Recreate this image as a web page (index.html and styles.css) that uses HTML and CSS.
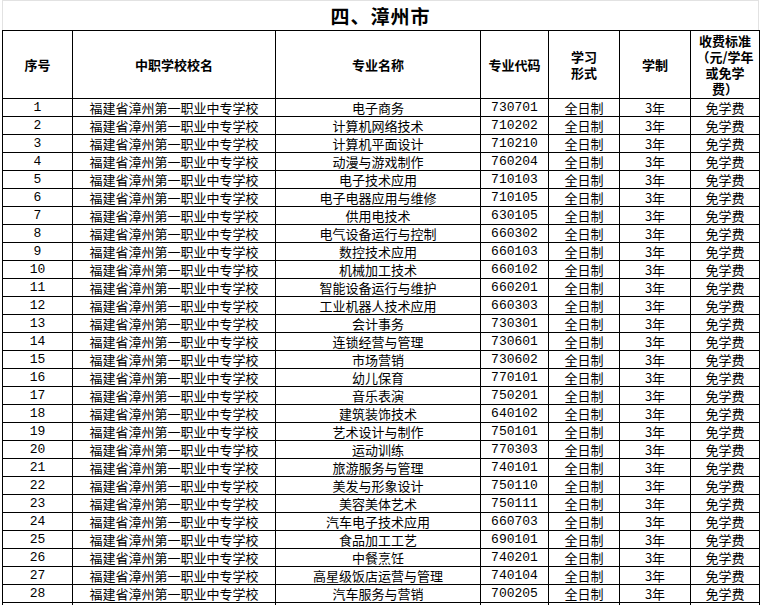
FILE: index.html
```html
<!DOCTYPE html>
<html lang="zh-CN">
<head>
<meta charset="utf-8">
<title>四、漳州市</title>
<link rel="stylesheet" href="styles.css">
</head>
<body>
<div class="sheet">
  <div class="title">四、漳州市</div>
  <table class="grid">
    <colgroup>
      <col class="c-no"><col class="c-school"><col class="c-major"><col class="c-code"><col class="c-form"><col class="c-years"><col class="c-fee">
    </colgroup>
    <thead>
      <tr>
        <th>序号</th>
        <th>中职学校校名</th>
        <th>专业名称</th>
        <th>专业代码</th>
        <th>学习<br>形式</th>
        <th>学制</th>
        <th>收费标准<br>（元/学年<br>或免学<br>费）</th>
      </tr>
    </thead>
    <tbody>
      <tr><td class="num">1</td><td>福建省漳州第一职业中专学校</td><td>电子商务</td><td class="num">730701</td><td>全日制</td><td>3年</td><td>免学费</td></tr>
      <tr><td class="num">2</td><td>福建省漳州第一职业中专学校</td><td>计算机网络技术</td><td class="num">710202</td><td>全日制</td><td>3年</td><td>免学费</td></tr>
      <tr><td class="num">3</td><td>福建省漳州第一职业中专学校</td><td>计算机平面设计</td><td class="num">710210</td><td>全日制</td><td>3年</td><td>免学费</td></tr>
      <tr><td class="num">4</td><td>福建省漳州第一职业中专学校</td><td>动漫与游戏制作</td><td class="num">760204</td><td>全日制</td><td>3年</td><td>免学费</td></tr>
      <tr><td class="num">5</td><td>福建省漳州第一职业中专学校</td><td>电子技术应用</td><td class="num">710103</td><td>全日制</td><td>3年</td><td>免学费</td></tr>
      <tr><td class="num">6</td><td>福建省漳州第一职业中专学校</td><td>电子电器应用与维修</td><td class="num">710105</td><td>全日制</td><td>3年</td><td>免学费</td></tr>
      <tr><td class="num">7</td><td>福建省漳州第一职业中专学校</td><td>供用电技术</td><td class="num">630105</td><td>全日制</td><td>3年</td><td>免学费</td></tr>
      <tr><td class="num">8</td><td>福建省漳州第一职业中专学校</td><td>电气设备运行与控制</td><td class="num">660302</td><td>全日制</td><td>3年</td><td>免学费</td></tr>
      <tr><td class="num">9</td><td>福建省漳州第一职业中专学校</td><td>数控技术应用</td><td class="num">660103</td><td>全日制</td><td>3年</td><td>免学费</td></tr>
      <tr><td class="num">10</td><td>福建省漳州第一职业中专学校</td><td>机械加工技术</td><td class="num">660102</td><td>全日制</td><td>3年</td><td>免学费</td></tr>
      <tr><td class="num">11</td><td>福建省漳州第一职业中专学校</td><td>智能设备运行与维护</td><td class="num">660201</td><td>全日制</td><td>3年</td><td>免学费</td></tr>
      <tr><td class="num">12</td><td>福建省漳州第一职业中专学校</td><td>工业机器人技术应用</td><td class="num">660303</td><td>全日制</td><td>3年</td><td>免学费</td></tr>
      <tr><td class="num">13</td><td>福建省漳州第一职业中专学校</td><td>会计事务</td><td class="num">730301</td><td>全日制</td><td>3年</td><td>免学费</td></tr>
      <tr><td class="num">14</td><td>福建省漳州第一职业中专学校</td><td>连锁经营与管理</td><td class="num">730601</td><td>全日制</td><td>3年</td><td>免学费</td></tr>
      <tr><td class="num">15</td><td>福建省漳州第一职业中专学校</td><td>市场营销</td><td class="num">730602</td><td>全日制</td><td>3年</td><td>免学费</td></tr>
      <tr><td class="num">16</td><td>福建省漳州第一职业中专学校</td><td>幼儿保育</td><td class="num">770101</td><td>全日制</td><td>3年</td><td>免学费</td></tr>
      <tr><td class="num">17</td><td>福建省漳州第一职业中专学校</td><td>音乐表演</td><td class="num">750201</td><td>全日制</td><td>3年</td><td>免学费</td></tr>
      <tr><td class="num">18</td><td>福建省漳州第一职业中专学校</td><td>建筑装饰技术</td><td class="num">640102</td><td>全日制</td><td>3年</td><td>免学费</td></tr>
      <tr><td class="num">19</td><td>福建省漳州第一职业中专学校</td><td>艺术设计与制作</td><td class="num">750101</td><td>全日制</td><td>3年</td><td>免学费</td></tr>
      <tr><td class="num">20</td><td>福建省漳州第一职业中专学校</td><td>运动训练</td><td class="num">770303</td><td>全日制</td><td>3年</td><td>免学费</td></tr>
      <tr><td class="num">21</td><td>福建省漳州第一职业中专学校</td><td>旅游服务与管理</td><td class="num">740101</td><td>全日制</td><td>3年</td><td>免学费</td></tr>
      <tr><td class="num">22</td><td>福建省漳州第一职业中专学校</td><td>美发与形象设计</td><td class="num">750110</td><td>全日制</td><td>3年</td><td>免学费</td></tr>
      <tr><td class="num">23</td><td>福建省漳州第一职业中专学校</td><td>美容美体艺术</td><td class="num">750111</td><td>全日制</td><td>3年</td><td>免学费</td></tr>
      <tr><td class="num">24</td><td>福建省漳州第一职业中专学校</td><td>汽车电子技术应用</td><td class="num">660703</td><td>全日制</td><td>3年</td><td>免学费</td></tr>
      <tr><td class="num">25</td><td>福建省漳州第一职业中专学校</td><td>食品加工工艺</td><td class="num">690101</td><td>全日制</td><td>3年</td><td>免学费</td></tr>
      <tr><td class="num">26</td><td>福建省漳州第一职业中专学校</td><td>中餐烹饪</td><td class="num">740201</td><td>全日制</td><td>3年</td><td>免学费</td></tr>
      <tr><td class="num">27</td><td>福建省漳州第一职业中专学校</td><td>高星级饭店运营与管理</td><td class="num">740104</td><td>全日制</td><td>3年</td><td>免学费</td></tr>
      <tr><td class="num">28</td><td>福建省漳州第一职业中专学校</td><td>汽车服务与营销</td><td class="num">700205</td><td>全日制</td><td>3年</td><td>免学费</td></tr>
      <tr><td class="num"></td><td></td><td></td><td class="num"></td><td></td><td></td><td></td></tr>
    </tbody>
  </table>
</div>
</body>
</html>
```

FILE: styles.css
```css
html, body {
  margin: 0;
  padding: 0;
  background: #ffffff;
  overflow: hidden;
}

.sheet {
  padding-left: 2px;
  font-family: "Noto Sans CJK SC", "Noto Sans", sans-serif;
  color: #000;
}

.title {
  width: 755px;
  height: 29px;
  border-top: 1px solid #e2e2e2;
  border-left: 1px solid #e2e2e2;
  border-right: 1px solid #e2e2e2;
  text-align: center;
  font-size: 19px;
  font-weight: bold;
  line-height: 29px;
  letter-spacing: 1px;
  font-family: "Noto Sans CJK SC", serif;
}

.grid {
  border-collapse: collapse;
  table-layout: fixed;
  width: 757px;
}

.c-no { width: 70px; }
.c-school { width: 203px; }
.c-major { width: 205px; }
.c-code { width: 68px; }
.c-form { width: 71px; }
.c-years { width: 71px; }
.c-fee { width: 69px; }

.grid th,
.grid td {
  border: 1px solid #000;
  padding: 0;
  text-align: center;
  vertical-align: middle;
  white-space: nowrap;
}

.grid th {
  height: 67px;
  font-size: 13px;
  font-weight: bold;
  line-height: 16px;
}

.grid td {
  height: 17px;
  font-size: 13px;
  line-height: 17px;
}

.grid td.num {
  font-family: "Liberation Mono", monospace;
}
```
